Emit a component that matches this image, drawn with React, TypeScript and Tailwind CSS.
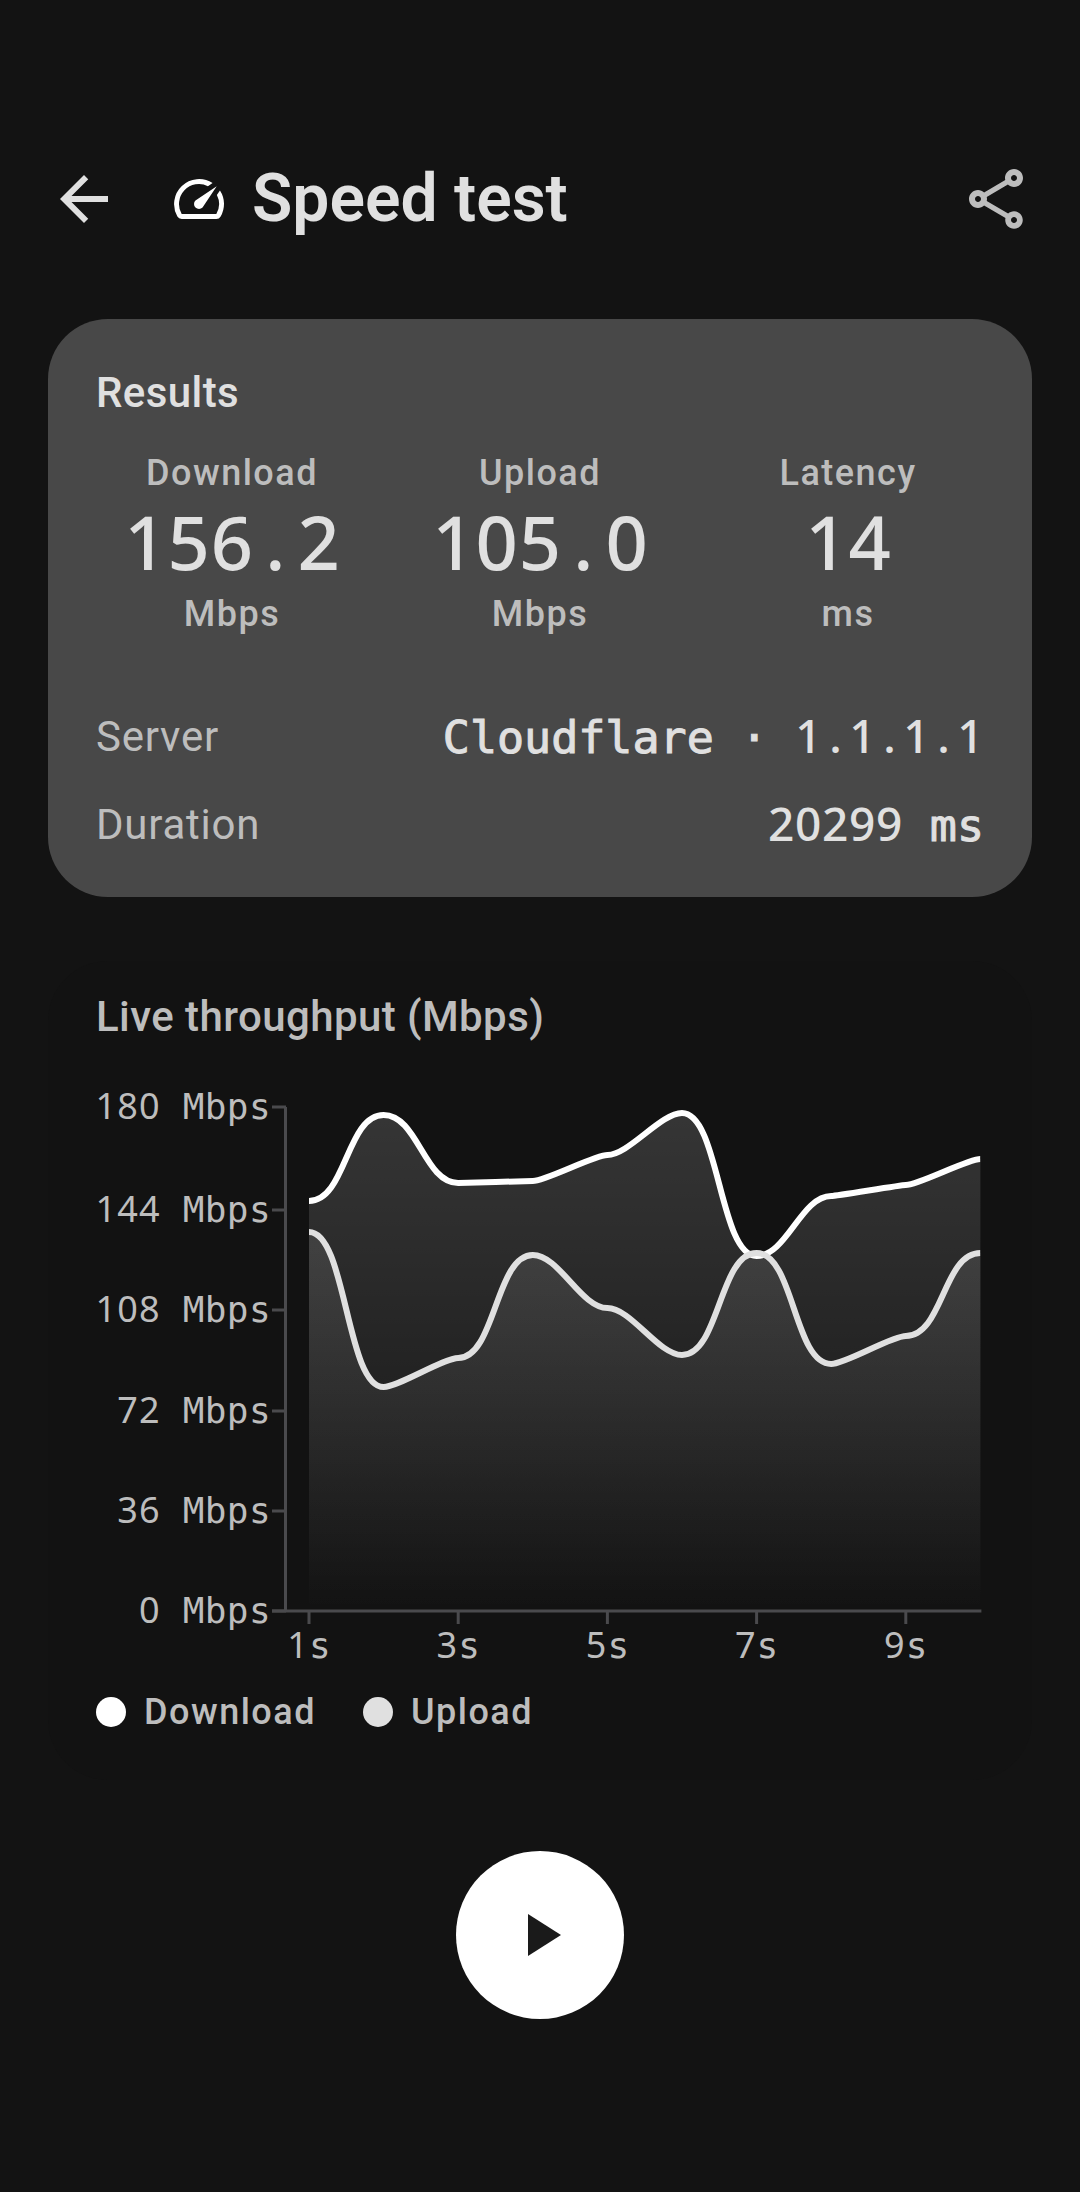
import type { ReactNode } from "react";

const MONO = "font-['DejaVu_Sans_Mono',monospace]";
const NUMERALS = "font-['Noto_Sans',sans-serif]";

const X0 = 309;
const STEP = 74.6;
const AXIS = "#4a4a4d";
const BASE = 1610 - 1090;

// y positions of each sample, in chart coordinates
const download = [1200, 1114, 1182, 1180, 1154, 1112, 1255, 1195, 1184, 1158].map((y) => y - 1090);
const upload = [1231, 1386, 1357, 1254, 1307, 1354, 1252, 1363, 1335, 1252].map((y) => y - 1090);

// Horizontal-tangent cubic whose handle length grows with the slope of the segment
function linePath(ys: number[]) {
  let d = `M${X0} ${ys[0]}`;
  for (let i = 1; i < ys.length; i++) {
    const x1 = X0 + STEP * (i - 1);
    const x2 = X0 + STEP * i;
    const k = 0.5 * Math.min(1, Math.abs(ys[i] - ys[i - 1]) / STEP);
    d += ` C${x1 + k * STEP} ${ys[i - 1]} ${x2 - k * STEP} ${ys[i]} ${x2} ${ys[i]}`;
  }
  return d;
}

function areaPath(ys: number[]) {
  return `${linePath(ys)} L${X0 + STEP * (ys.length - 1)} ${BASE} L${X0} ${BASE} Z`;
}

const yTicks = [
  ["180", 16],
  ["144", 119],
  ["108", 219],
  ["72", 320],
  ["36", 420],
  ["0", 520],
] as const;
const xTicks = ["1", "3", "5", "7", "9"];

function ThroughputChart() {
  return (
    <svg width="984" height="615" viewBox="48 -30 984 615" className="mt-[20px] -ml-12 block" fill="none">
      <defs>
        <linearGradient id="downFill" x1="0" y1="22" x2="0" y2="520" gradientUnits="userSpaceOnUse">
          <stop offset="0" stopColor="#ffffff" stopOpacity="0.15" />
          <stop offset="1" stopColor="#ffffff" stopOpacity="0" />
        </linearGradient>
        <linearGradient id="upFill" x1="0" y1="162" x2="0" y2="520" gradientUnits="userSpaceOnUse">
          <stop offset="0" stopColor="#e0e0e0" stopOpacity="0.11" />
          <stop offset="1" stopColor="#e0e0e0" stopOpacity="0" />
        </linearGradient>
        <clipPath id="plot">
          <rect x={X0} y="0" width={STEP * 9} height={BASE} />
        </clipPath>
      </defs>
      <path d={areaPath(download)} fill="url(#downFill)" />
      <path d={areaPath(upload)} fill="url(#upFill)" />
      <g clipPath="url(#plot)">
        <path d={linePath(download)} stroke="#ffffff" strokeWidth="6" strokeLinejoin="round" />
        <path d={linePath(upload)} stroke="#e0e0e0" strokeWidth="6" strokeLinejoin="round" />
      </g>
      <path d={`M285.5 16V${BASE}`} stroke={AXIS} strokeWidth="3" />
      <path d={`M272 ${BASE}H${X0 + STEP * 9 + 1}`} stroke={AXIS} strokeWidth="3" />
      {yTicks.map(([label, y]) => (
        <g key={label}>
          <path d={`M272 ${y}H286`} stroke={AXIS} strokeWidth="3" />
          <text x="271" y={y + 12} textAnchor="end" fontSize="36" fill="#bdbdbd" className={`${MONO} tracking-[0.4px]`}>
            <tspan className={`${NUMERALS} tracking-[1.1px]`}>{label}</tspan> Mbps
          </text>
        </g>
      ))}
      {xTicks.map((label, i) => {
        const x = X0 + STEP * 2 * i;
        return (
          <g key={label}>
            <path d={`M${x} ${BASE}V533`} stroke={AXIS} strokeWidth="3" />
            <text x={x} y="567" textAnchor="middle" fontSize="36" fill="#bdbdbd" className={MONO}>
              <tspan className={`${NUMERALS} tracking-[1.1px]`}>{label}</tspan>s
            </text>
          </g>
        );
      })}
    </svg>
  );
}

// Numerals set on a fixed cell width so that digits and points keep a monospaced rhythm
function Numerals({ text, cell }: { text: string; cell: string }) {
  return (
    <span className={`${NUMERALS} inline-block font-medium text-[#e0e0e0]`}>
      {text.split("").map((ch, i) => (
        <span key={i} className={`inline-block text-center ${cell}`}>
          {ch}
        </span>
      ))}
    </span>
  );
}

function Stat({ label, value, unit }: { label: string; value: string; unit: string }) {
  return (
    <div className="flex w-[217px] flex-col items-center">
      <span className="text-[36px] leading-[46px] font-medium tracking-[1.5px] text-[#bdbdbd]">{label}</span>
      <span className="text-[74px] leading-[92px]">
        <Numerals text={value} cell="w-[43.3px]" />
      </span>
      <span className="text-[36px] leading-[46px] font-medium tracking-[1.5px] text-[#bdbdbd]">{unit}</span>
    </div>
  );
}

function InfoRow({ label, children }: { label: string; children: ReactNode }) {
  return (
    <div className="flex h-[88px] items-center justify-between">
      <span className="text-[42px] font-normal tracking-[0.75px] text-[#bdbdbd]">{label}</span>
      <span className={`${MONO} text-[45px] whitespace-pre text-[#e0e0e0] [-webkit-text-stroke:1px_#e0e0e0]`}>{children}</span>
    </div>
  );
}

function RowNumerals({ text }: { text: string }) {
  return (
    <span className="text-[46px] [-webkit-text-stroke:0]">
      <Numerals text={text} cell="w-[27px]" />
    </span>
  );
}

function LegendItem({ color, label }: { color: string; label: string }) {
  return (
    <div className="flex items-center gap-[18px]">
      <span className="h-[30px] w-[30px] rounded-full" style={{ backgroundColor: color }} />
      <span className="text-[36px] leading-[44px] font-medium tracking-[1.5px] text-[#bdbdbd]">{label}</span>
    </div>
  );
}

export default function App() {
  return (
    <div className="h-[2192px] w-[1080px] bg-[#131313] px-12 pt-[163px] font-['Roboto',sans-serif]">
      <header className="flex h-[72px] items-center">
        <svg width="72" height="72" viewBox="0 0 24 24" fill="#e0e0e0">
          <path d="M20 11H7.83l5.59-5.59L12 4l-8 8 8 8 1.41-1.41L7.83 13H20v-2z" />
        </svg>
        <svg width="60" height="60" viewBox="0 0 24 24" fill="#ffffff" className="ml-[49px]">
          <path d="M20.38 8.57l-1.23 1.85a8 8 0 0 1-.22 7.58H5.07A8 8 0 0 1 15.58 6.85l1.85-1.23A10 10 0 0 0 3.35 19a2 2 0 0 0 1.72 1h13.85a2 2 0 0 0 1.74-1 10 10 0 0 0-.27-10.44zm-9.79 6.84a2 2 0 0 0 2.83 0l5.66-8.49-8.49 5.66a2 2 0 0 0 0 2.83z" />
        </svg>
        <h1 className="ml-[23px] flex-1 text-[66px] leading-none font-semibold text-[#e0e0e0]">Speed test</h1>
        <svg width="72" height="72" viewBox="0 0 24 24" fill="#bdbdbd">
          <path d="M18 16.08c-.76 0-1.44.3-1.96.77L8.91 12.7c.05-.23.09-.46.09-.7s-.04-.47-.09-.7l7.05-4.11c.54.5 1.25.81 2.04.81 1.66 0 3-1.34 3-3s-1.34-3-3-3-3 1.34-3 3c0 .24.04.47.09.7L8.04 9.81C7.5 9.31 6.79 9 6 9c-1.66 0-3 1.34-3 3s1.34 3 3 3c.79 0 1.5-.31 2.04-.81l7.12 4.16c-.05.21-.08.43-.08.65 0 1.61 1.31 2.92 2.92 2.92s2.92-1.31 2.92-2.92-1.31-2.92-2.92-2.92zM18 4c.55 0 1 .45 1 1s-.45 1-1 1-1-.45-1-1 .45-1 1-1zM6 13c-.55 0-1-.45-1-1s.45-1 1-1 1 .45 1 1-.45 1-1 1zm12 7.02c-.55 0-1-.45-1-1s.45-1 1-1 1 .45 1 1-.45 1-1 1z" />
        </svg>
      </header>

      <section className="mt-[84px] h-[578px] rounded-[60px] bg-[#484848] px-12 pt-[50px]">
        <h2 className="text-[42px] leading-[48px] font-medium tracking-[0.42px] text-[#e0e0e0]">Results</h2>
        <div className="mt-[33px] flex justify-center gap-[91px]">
          <Stat label="Download" value="156.2" unit="Mbps" />
          <Stat label="Upload" value="105.0" unit="Mbps" />
          <Stat label="Latency" value="14" unit="ms" />
        </div>
        <div className="mt-[55px]">
          <InfoRow label="Server">
            {"Cloudflare · "}
            <RowNumerals text="1.1.1.1" />
          </InfoRow>
          <InfoRow label="Duration">
            <RowNumerals text="20299" />
            {" ms"}
          </InfoRow>
        </div>
      </section>

      <section className="mt-[64px] h-[819px] rounded-[60px] bg-[#121212] px-12 pt-[32px]">
        <h2 className="text-[42px] leading-[48px] font-medium tracking-[0.42px] text-[#bdbdbd]">Live throughput (Mbps)</h2>
        <ThroughputChart />
        <div className="mt-[14px] flex items-center gap-[47px]">
          <LegendItem color="#ffffff" label="Download" />
          <LegendItem color="#e0e0e0" label="Upload" />
        </div>
      </section>

      <div className="mt-[71px] flex justify-center">
        <button className="flex h-[168px] w-[168px] items-center justify-center rounded-full bg-white">
          <svg width="72" height="72" viewBox="0 0 24 24" fill="#1a1a1a">
            <path d="M8 5v14l11-7z" />
          </svg>
        </button>
      </div>
    </div>
  );
}
